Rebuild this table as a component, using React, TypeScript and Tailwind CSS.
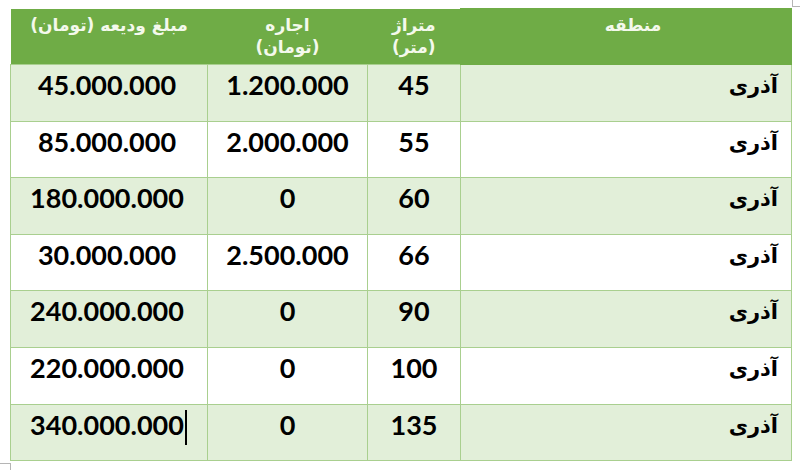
const rows = [
  { deposit: "45.000.000", rent: "1.200.000", area: "45" },
  { deposit: "85.000.000", rent: "2.000.000", area: "55" },
  { deposit: "180.000.000", rent: "0", area: "60" },
  { deposit: "30.000.000", rent: "2.500.000", area: "66" },
  { deposit: "240.000.000", rent: "0", area: "90" },
  { deposit: "220.000.000", rent: "0", area: "100" },
  { deposit: "340.000.000", rent: "0", area: "135" },
];

const numFont = "font-['Lato','Open_Sans',sans-serif] font-bold text-[27px] leading-[32px] text-black";
const faFont = "font-['DejaVu_Sans',sans-serif]";

export default function App() {
  return (
    <div className="relative w-[800px] h-[470px] bg-white overflow-hidden">
      {/* word table corner marks */}
      <div className="absolute left-[792px] top-0 h-[7px] w-[8px] border-l border-b border-[#b5b5b5]" />
      <div className="absolute left-0 top-[463px] h-[7px] w-[11px] border-t border-r border-[#b5b5b5]" />

      <div className="pt-[8px] pl-[10px]">
        <table dir="rtl" className="border-collapse table-fixed w-[781px]">
          <colgroup>
            <col className="w-[331px]" />
            <col className="w-[93px]" />
            <col className="w-[160px]" />
            <col className="w-[197px]" />
          </colgroup>
          <thead>
            <tr className={`h-[56px] bg-[#6fac46] text-[#f4f9ec] ${faFont} font-bold text-[17px] leading-[22px]`}>
              <th className="align-top pt-[5px] pl-[14px] text-center border border-[#6fac46]">منطقه</th>
              <th className="align-top pt-[5px] text-center">
                متراژ
                <br />
                (متر)
              </th>
              <th className="align-top pt-[5px] text-center">
                اجاره
                <br />
                (تومان)
              </th>
              <th className="align-top pt-[5px] text-center whitespace-nowrap">مبلغ ودیعه (تومان)</th>
            </tr>
          </thead>
          <tbody>
            {rows.map((r, i) => (
              <tr key={i} className={`h-[56.6px] ${i % 2 === 0 ? "bg-[#e2efd9]" : "bg-white"}`}>
                <td className="align-top border border-[#a9cf8f] pt-[7px] pr-[13px] text-right">
                  <span className={`${faFont} font-bold text-[21px] leading-[28px] text-black`}>آذری</span>
                </td>
                <td className={`align-top border border-[#a9cf8f] pt-[4px] text-center ${numFont}`}>{r.area}</td>
                <td className={`align-top border border-[#a9cf8f] pt-[4px] text-center ${numFont}`}>{r.rent}</td>
                <td className={`align-top border border-[#a9cf8f] pt-[4px] pr-[4px] text-center ${numFont}`}>
                  <span dir="ltr" className="relative inline-block">
                    {r.deposit}
                    {i === rows.length - 1 && (
                      <span className="absolute right-[-3px] top-[1px] w-[1.5px] h-[35px] bg-black" />
                    )}
                  </span>
                </td>
              </tr>
            ))}
          </tbody>
        </table>
      </div>
    </div>
  );
}
